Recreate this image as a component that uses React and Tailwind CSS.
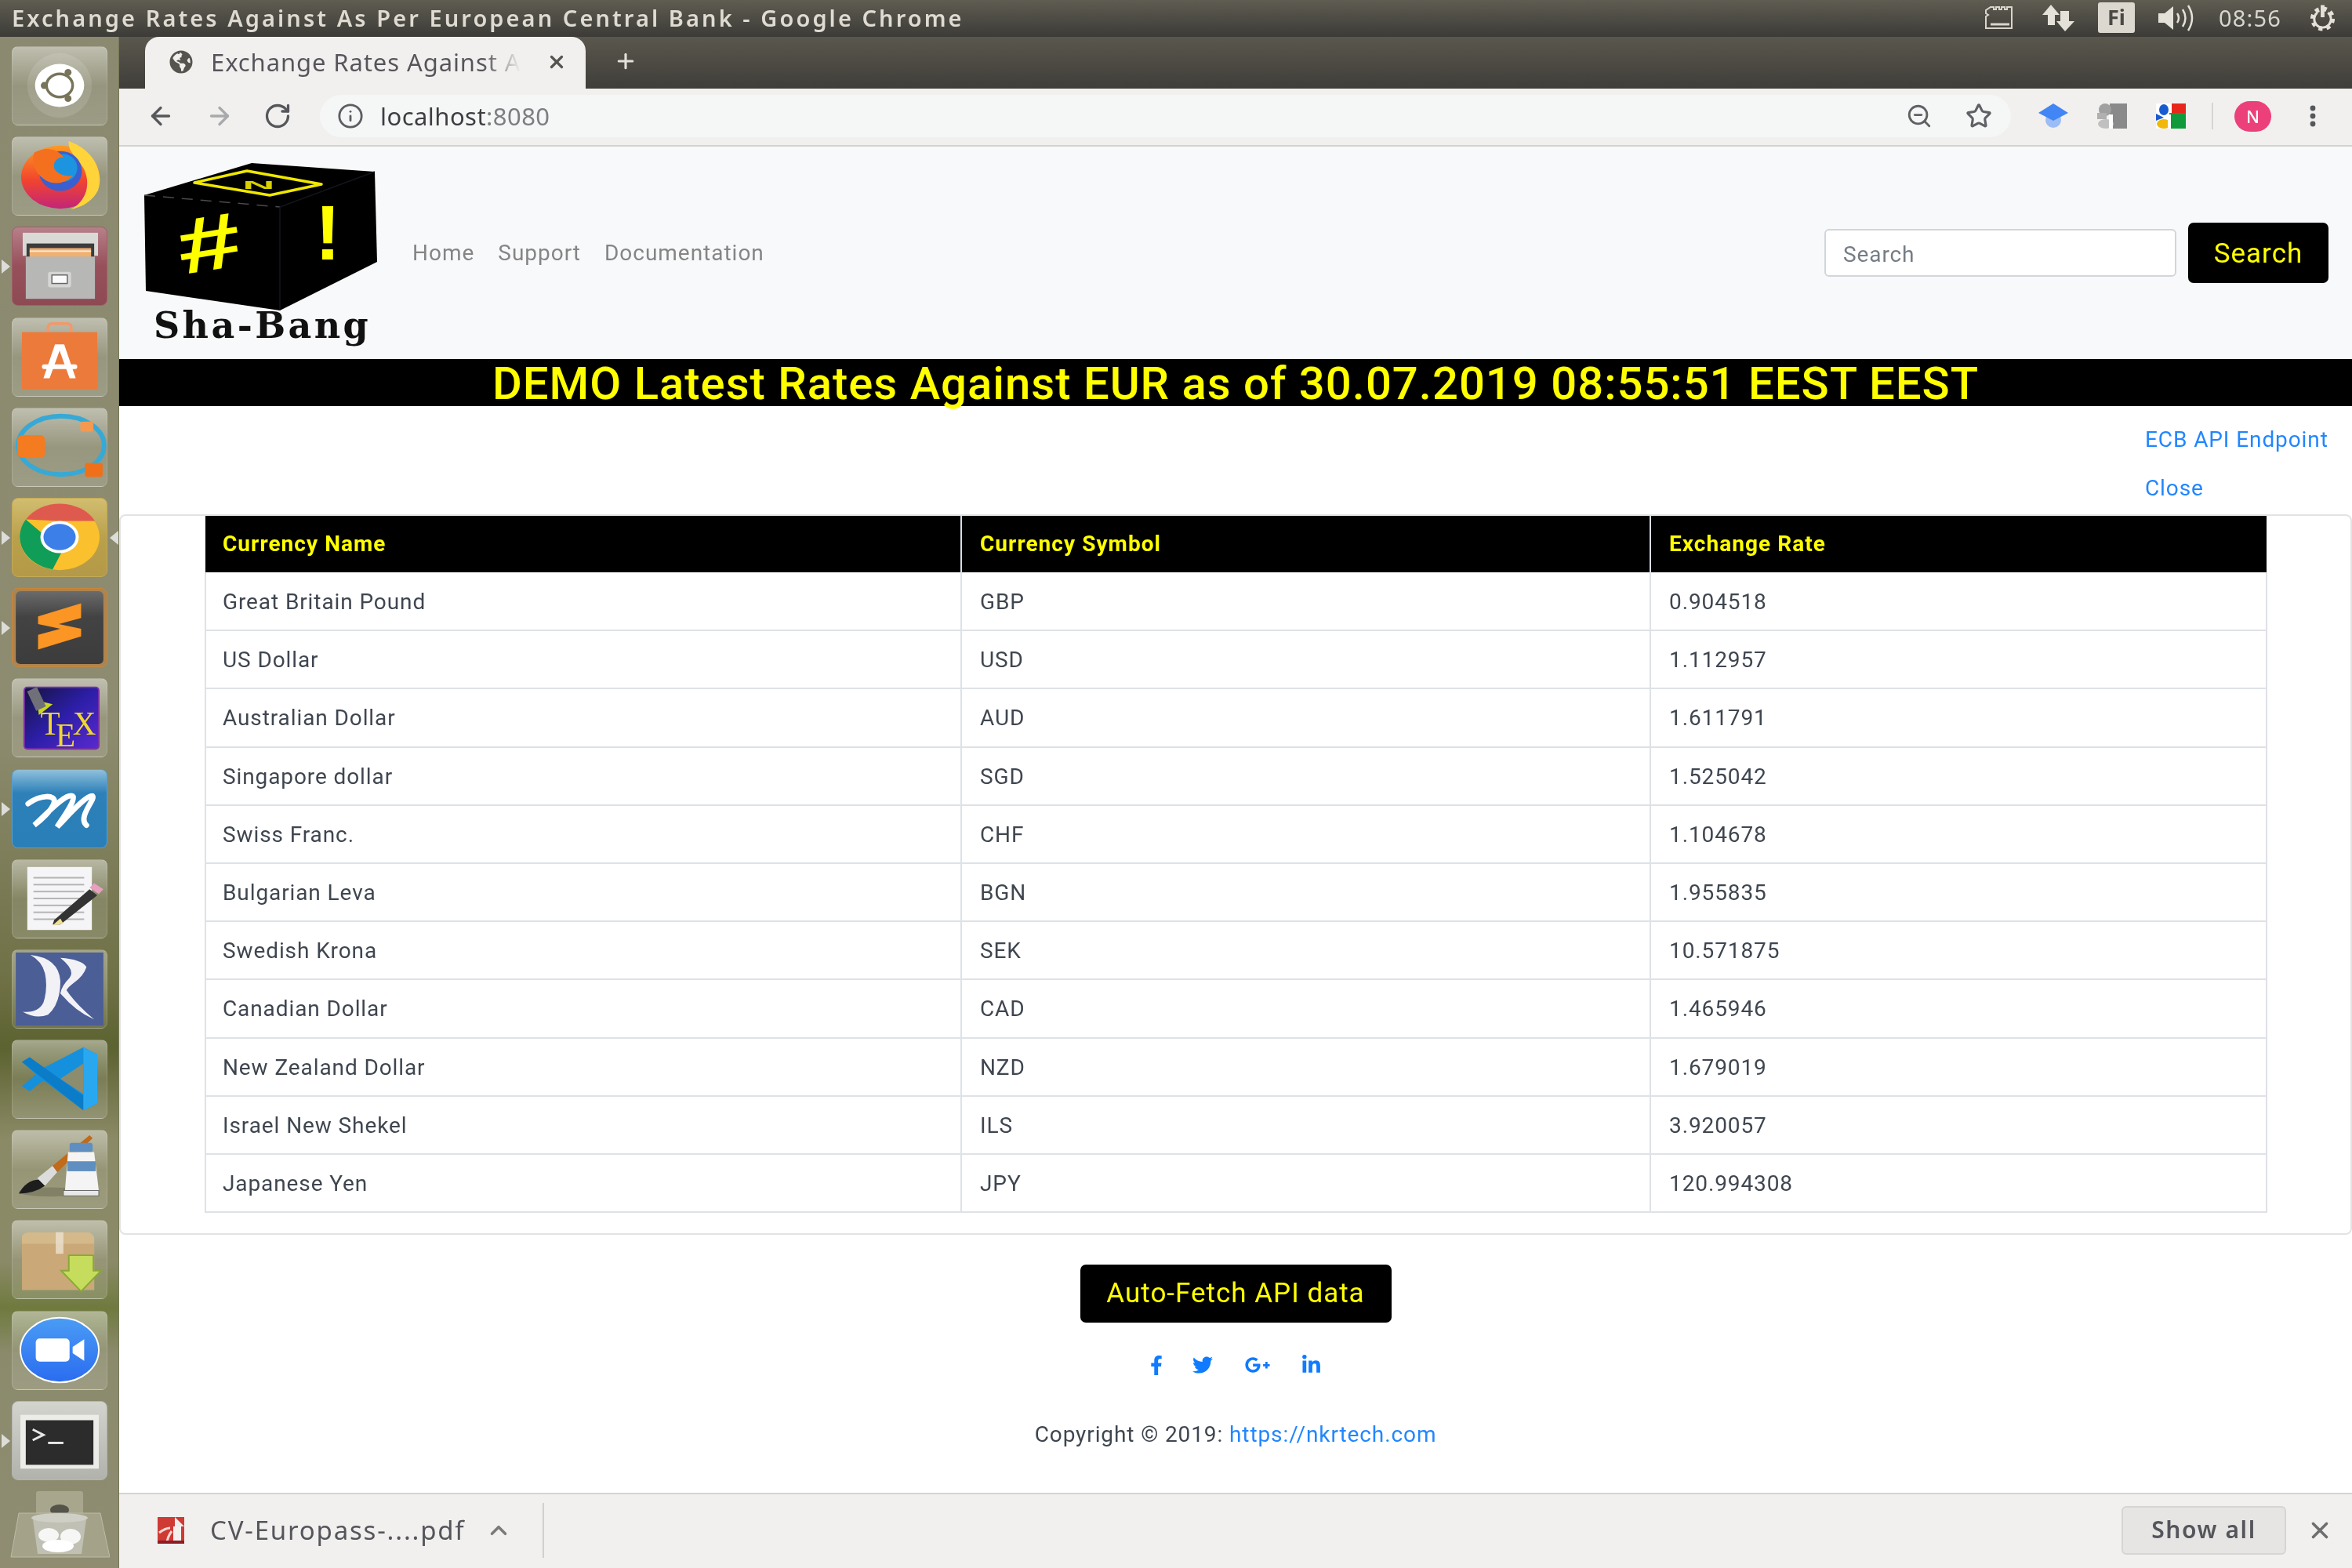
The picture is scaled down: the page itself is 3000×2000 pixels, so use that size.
import React from "react";
import { ArrowLeft, ArrowRight, RotateCw, Info, ZoomOut, Star, X, Plus, ChevronUp } from "lucide-react";
import { FaFacebookF, FaTwitter, FaGooglePlusG, FaLinkedinIn, FaGlobeAmericas } from "react-icons/fa";

const rates = [
  ["Great Britain Pound", "GBP", "0.904518"],
  ["US Dollar", "USD", "1.112957"],
  ["Australian Dollar", "AUD", "1.611791"],
  ["Singapore dollar", "SGD", "1.525042"],
  ["Swiss Franc.", "CHF", "1.104678"],
  ["Bulgarian Leva", "BGN", "1.955835"],
  ["Swedish Krona", "SEK", "10.571875"],
  ["Canadian Dollar", "CAD", "1.465946"],
  ["New Zealand Dollar", "NZD", "1.679019"],
  ["Israel New Shekel", "ILS", "3.920057"],
  ["Japanese Yen", "JPY", "120.994308"],
];

const tileBase = "relative h-[101px] w-[122px] rounded-[8px] border";
const tileDefault = "border-white/15 bg-gradient-to-b from-white/45 via-white/10 to-white/15";

function Tile({ cls = tileDefault, left, right, children }) {
  return (
    <div className={`${tileBase} ${cls} shrink-0`}>
      {left && <span className="absolute left-[-14px] top-[41px] h-0 w-0 border-y-[9px] border-l-[11px] border-y-transparent border-l-[#dcdcd8]" />}
      {right && <span className="absolute right-[-15px] top-[41px] h-0 w-0 border-y-[9px] border-r-[11px] border-y-transparent border-r-[#dcdcd8]" />}
      <svg viewBox="0 0 122 101" className="absolute inset-0 h-full w-full">{children}</svg>
    </div>
  );
}

function Dock() {
  return (
    <aside className="flex h-[1953px] w-[152px] shrink-0 flex-col items-center gap-[14.2px] border-r border-[#77785a] bg-[linear-gradient(180deg,#8b8a70_0%,#8d8c70_45%,#6e7044_62%,#5c6230_66%,#8b8a66_72%,#8b8a68_80%,#6f7a3e_83%,#8b8b6c_86%,#8f8c72_100%)] pt-[12px]">
      {/* Ubuntu */}
      <Tile>
        <ellipse cx="61" cy="50" rx="42" ry="42" fill="#ffffff" opacity=".12" />
        <ellipse cx="61" cy="50" rx="32" ry="28" fill="#fff" />
        <ellipse cx="61" cy="50" rx="17" ry="15" fill="none" stroke="#77745a" strokeWidth="3.5" />
        <circle cx="41" cy="50" r="4.5" fill="#77745a" />
        <circle cx="72" cy="33" r="4.5" fill="#77745a" />
        <circle cx="72" cy="67" r="4.5" fill="#77745a" />
      </Tile>
      {/* Firefox */}
      <Tile>
        <defs>
          <linearGradient id="ff" x1="0" y1="0" x2="0" y2="1">
            <stop offset="0" stopColor="#ff9a1f" />
            <stop offset=".55" stopColor="#f1442e" />
            <stop offset="1" stopColor="#c2257a" />
          </linearGradient>
        </defs>
        <ellipse cx="62" cy="52" rx="51" ry="41" fill="url(#ff)" />
        <path d="M73 5c34 12 46 42 38 64-7 14-20 22-36 25 18-8 28-30 18-52-6-13-22-22-20-37z" fill="#ffd43a" />
        <ellipse cx="62" cy="44" rx="28" ry="26" fill="#3a5fd0" />
        <ellipse cx="66" cy="40" rx="18" ry="18" fill="#1d94e0" />
        <path d="M28 20c14-8 30-6 38 6-8 0-14 6-12 14 2 6 12 12 24 10-8 10-26 14-38 4-12-8-16-24-12-34z" fill="#f4701f" />
      </Tile>
      {/* Files */}
      <Tile left cls="border-[#9d5f68] bg-gradient-to-b from-[#b7808a] via-[#96505a] to-[#8e4a52]">
        <rect x="13" y="7" width="98" height="30" fill="#d9d9d6" />
        <rect x="18" y="21" width="88" height="30" fill="#3c3c3c" />
        <rect x="22" y="27" width="80" height="14" fill="#f0b070" />
        <rect x="22" y="30" width="80" height="2" fill="#fff" opacity=".7" />
        <rect x="17" y="38" width="90" height="55" fill="#b7b7b5" />
        <rect x="46" y="58" width="30" height="20" rx="3" fill="#d6d6d4" />
        <rect x="51" y="62" width="20" height="11" fill="#fafafa" stroke="#666" strokeWidth="1.5" />
      </Tile>
      {/* Software */}
      <Tile>
        <path d="M46 20v-8q0-5 5-5h20q5 0 5 5v8" fill="none" stroke="#ee9a6e" strokeWidth="4" />
        <rect x="12" y="18" width="98" height="74" fill="#ec7a3b" />
        <path d="M40 78l15-44h12l15 44h-8l-13-36-13 36z" fill="#fff" />
        <rect x="38" y="60" width="46" height="6" rx="3" fill="#fff" />
      </Tile>
      {/* Arc diagram */}
      <Tile>
        <ellipse cx="63" cy="48" rx="56" ry="38" fill="none" stroke="#36a9d6" strokeWidth="6" />
        <rect x="6" y="35" width="36" height="29" rx="6" fill="#f47b20" />
        <rect x="88" y="17" width="17" height="13" rx="3" fill="#f49a50" />
        <rect x="94" y="71" width="23" height="18" rx="3" fill="#f0701a" />
      </Tile>
      {/* Chrome */}
      <Tile left right cls="border-[#c4aa55] bg-gradient-to-b from-[#d2bd70] via-[#b9a04b] to-[#b49a48]">
        <ellipse cx="61" cy="50" rx="52" ry="43" fill="#fbc02d" />
        <path d="M17 27A52 43 0 0 1 107 29L61 29z" fill="#df5a4e" />
        <path d="M17 27A52 43 0 0 0 52 92L74 50 44 50z" fill="#109d58" />
        <ellipse cx="61" cy="50" rx="25" ry="21" fill="#fff" />
        <ellipse cx="61" cy="50" rx="21" ry="17" fill="#3d7fe8" />
      </Tile>
      {/* Sublime */}
      <Tile left cls="border-[#c8873a] bg-[#ad8450]">
        <defs>
          <linearGradient id="sb" x1="0" y1="0" x2="0" y2="1">
            <stop offset="0" stopColor="#6b6b6b" />
            <stop offset=".35" stopColor="#434343" />
            <stop offset="1" stopColor="#3c3c3c" />
          </linearGradient>
        </defs>
        <rect x="4" y="3" width="114" height="95" rx="6" fill="url(#sb)" />
        <polygon points="33,36 89,19 89,38 60,46 89,52 89,62 33,79 33,60 62,52 33,46" fill="#fb9524" />
      </Tile>
      {/* TeX */}
      <Tile>
        <defs>
          <linearGradient id="tx" x1="0" y1="0" x2="1" y2="1">
            <stop offset="0" stopColor="#14143e" />
            <stop offset=".5" stopColor="#2d1ea8" />
            <stop offset="1" stopColor="#5a2ad0" />
          </linearGradient>
        </defs>
        <rect x="15" y="11" width="97" height="80" rx="4" fill="url(#tx)" stroke="#7a2fa8" strokeWidth="2" />
        <path d="M32 28l20 5-18 14z" fill="#c8d820" />
        <rect x="24" y="12" width="14" height="28" fill="#707078" transform="rotate(-25 31 26)" />
        <text x="36" y="72" fontFamily="'Liberation Serif', serif" fontSize="42" fill="#f0d830">T</text>
        <text x="56" y="88" fontFamily="'Liberation Serif', serif" fontSize="42" fill="#f0d830">E</text>
        <text x="78" y="72" fontFamily="'Liberation Serif', serif" fontSize="42" fill="#f0d830">X</text>
      </Tile>
      {/* Script M */}
      <Tile left cls="border-[#5c9dc9] bg-[linear-gradient(180deg,#8fc0dc_0%,#2d80b8_30%,#2a7fb8_100%)]">
        <path d="M20 44C36 32 56 32 54 42 52 52 36 66 28 72 44 58 68 30 78 34 84 38 60 70 58 74 70 62 96 32 104 34 108 38 84 62 96 72" fill="none" stroke="#fff" strokeWidth="7" strokeLinecap="round" />
      </Tile>
      {/* Notepad */}
      <Tile>
        <rect x="19" y="9" width="84" height="82" fill="#f5f5f7" />
        {[22, 31, 40, 49, 58, 67, 76].map((y) => (
          <rect key={y} x="27" y={y} width="66" height="2" fill="#b4b4b4" />
        ))}
        <polygon points="54,78 100,38 110,46 62,84 52,84" fill="#333" />
        <polygon points="100,36 112,44 118,38 106,30" fill="#e8a0c0" />
        <polygon points="62,76 52,85 66,83" fill="#f0e090" />
      </Tile>
      {/* JR */}
      <Tile cls="border-white/15 bg-gradient-to-b from-white/35 to-white/10">
        <rect x="4" y="3" width="114" height="95" fill="#4b5e96" />
        <path d="M23 6Q60 10 62 40 62 70 46 84 30 90 13 80 33 82 40 68 46 50 42 30 38 14 23 6z" fill="#f2f2f6" />
        <path d="M62 10Q90 12 96 22 92 34 80 42 72 48 70 52 82 70 106 90 82 80 62 56 64 46 74 36 82 26 62 10z" fill="#f2f2f6" />
      </Tile>
      {/* VS Code */}
      <Tile>
        <polygon points="92,9 110,18 110,82 92,91 40,52 22,66 12,60 30,44 12,28 22,22 40,36" fill="#1590dc" />
        <polygon points="12,28 22,22 92,72 92,91" fill="#0a7cc8" />
        <polygon points="92,9 110,18 110,82 92,91" fill="#29a8f0" />
        <polygon points="92,30 92,70 62,50" fill="#8c8c6f" />
      </Tile>
      {/* Paint */}
      <Tile>
        <ellipse cx="50" cy="80" rx="42" ry="6" fill="#3a3a2c" opacity=".25" />
        <path d="M8 82q10-18 26-18l8 8q-14 10-34 10z" fill="#1d1d1d" />
        <polygon points="32,62 52,46 58,54 42,72" fill="#dcdcdc" />
        <polygon points="52,46 100,6 104,10 58,54" fill="#c06a1a" />
        <rect x="74" y="16" width="30" height="12" rx="3" fill="#5f8fc0" />
        <path d="M72 28h34l6 50H68z" fill="#f4f4f4" />
        <rect x="71" y="40" width="37" height="13" fill="#5f8fc0" />
        <rect x="66" y="78" width="46" height="7" fill="#e8e8e8" stroke="#666" />
      </Tile>
      {/* Package */}
      <Tile>
        <path d="M12 20q2-4 8-5h78q6 1 8 7v68H12z" fill="#d4b98a" />
        <rect x="12" y="30" width="94" height="60" fill="#caa877" />
        <rect x="56" y="15" width="10" height="28" fill="#efe6d4" opacity=".75" />
        <polygon points="73,45 105,45 105,65 115,65 89,92 63,65 73,65" fill="#c6dc5c" stroke="#8aa838" strokeWidth="2" />
      </Tile>
      {/* Zoom */}
      <Tile>
        <defs>
          <linearGradient id="zm" x1="0" y1="0" x2="0" y2="1">
            <stop offset="0" stopColor="#4a9cf5" />
            <stop offset="1" stopColor="#2a6cf0" />
          </linearGradient>
        </defs>
        <ellipse cx="61" cy="50" rx="51" ry="42" fill="url(#zm)" stroke="#fff" strokeWidth="2" />
        <rect x="30" y="35" width="44" height="30" rx="5" fill="#fff" />
        <polygon points="78,46 93,36 93,64 78,54" fill="#fff" />
      </Tile>
      {/* Terminal */}
      <Tile left cls="border-[#b5b5b0] bg-gradient-to-b from-[#d4d4ce] to-[#b2b2ac]">
        <rect x="10" y="17" width="102" height="70" fill="#ecece8" />
        <rect x="17" y="24" width="88" height="58" fill="#2c2c2c" />
        <path d="M26 36l14 7-14 7" fill="none" stroke="#e8e8e8" strokeWidth="3" />
        <rect x="46" y="52" width="20" height="3" fill="#e8e8e8" />
      </Tile>
      {/* Trash */}
      <div className="relative h-[90px] w-[128px] shrink-0">
        <svg viewBox="0 0 128 90" className="absolute inset-0 h-full w-full">
          <rect x="34" y="0" width="60" height="30" rx="3" fill="#a9a68e" />
          <ellipse cx="64" cy="24" rx="12" ry="7" fill="#55544a" />
          <polygon points="12,28 116,28 128,84 2,84" fill="#a4a288" stroke="#bdbca8" />
          <path d="M30 36h68l-6 44H36z" fill="#c0c0b4" />
          <ellipse cx="64" cy="34" rx="36" ry="6" fill="#cfcfc6" />
          <ellipse cx="50" cy="56" rx="13" ry="9" fill="#f6f6f4" />
          <ellipse cx="78" cy="58" rx="13" ry="10" fill="#f6f6f4" />
          <ellipse cx="62" cy="70" rx="20" ry="8" fill="#ffffff" />
        </svg>
      </div>
    </aside>
  );
}

function TitleBar() {
  return (
    <header className="flex h-[47px] shrink-0 items-center bg-gradient-to-b from-[#5f5d52] to-[#3c3b37] pb-[2px] pl-[15px] font-['Noto_Sans',sans-serif] text-[#dfdbd2]">
      <span className="text-[29px] font-semibold tracking-[3.07px] whitespace-nowrap">Exchange Rates Against As Per European Central Bank - Google Chrome</span>
      <div className="ml-auto flex items-center">
        <svg viewBox="0 0 38 31" className="h-[31px] w-[38px] text-[#d8d5cc]" fill="none" stroke="currentColor" strokeWidth="2">
          <path d="M8 2h4v3h3V2h4v3h3V2h4v3h3V2h6v27H2V14l3-2-3-2V6z" />
          <path d="M8 24h24" strokeWidth="3" />
        </svg>
        <svg viewBox="0 0 41 34" className="ml-[36px] h-[34px] w-[41px]" fill="#e4e1d9">
          <path d="M11 0l11 13h-6v13H7V13H0zM29 34L18 21h5V8h11v13h7z" />
        </svg>
        <div className="ml-[30px] flex h-[39px] w-[47px] items-center justify-center rounded-[3px] bg-[#dcd8d0] text-[27px] font-bold text-[#4a4943]">Fi</div>
        <svg viewBox="0 0 46 36" className="ml-[30px] h-[36px] w-[46px] text-[#e4e1d9]" fill="none" stroke="currentColor" strokeWidth="2.5">
          <polygon points="0,12 8,12 19,3 19,33 8,24 0,24" fill="currentColor" stroke="none" />
          <path d="M24 12q4 6 0 12M31 7q7 11 0 22M38 2q10 16 0 32" />
        </svg>
        <span className="ml-[31px] w-[84px] text-[29px] tracking-[1.2px] text-[#d8d6d0]">08:56</span>
        <svg viewBox="0 0 38 36" className="ml-[30px] mr-[19px] h-[36px] w-[37px] text-[#e4e1d9]" fill="none" stroke="currentColor">
          <circle cx="19" cy="19" r="13" strokeWidth="6" strokeDasharray="5 5.2" />
          <path d="M12 11a11 11 0 1 0 14 0" strokeWidth="3" />
          <path d="M19 1v16" strokeWidth="5" />
        </svg>
      </div>
    </header>
  );
}

function TabStrip() {
  return (
    <div className="flex h-[66px] shrink-0 items-end bg-gradient-to-b from-[#5a574d] to-[#3f3e39] pl-[33px] font-['Noto_Sans',sans-serif]">
      <div className="flex h-[66px] w-[562px] items-center rounded-t-[18px] bg-[#f1f0ee] pb-[2px] pl-[30px] pr-[24px]">
        <FaGlobeAmericas className="h-[30px] w-[32px] shrink-0 text-[#55544f]" />
        <span className="ml-[22px] whitespace-nowrap bg-gradient-to-r from-[#55545a] from-[88%] to-[#f1f0ee] bg-clip-text text-[31px] tracking-[0.9px] text-transparent">Exchange Rates Against A</span>
        <X className="ml-auto h-[26px] w-[26px] shrink-0 text-[#55544f]" strokeWidth={3} />
      </div>
      <Plus className="mb-[20px] ml-[36px] h-[30px] w-[30px] text-[#e2e0da]" strokeWidth={2.5} />
    </div>
  );
}

function Toolbar() {
  return (
    <div className="flex h-[74px] shrink-0 items-center border-b-2 border-[#d2d2d0] bg-[#f1f0ee] pb-[2px] pl-[35px] font-['Noto_Sans',sans-serif]">
      <ArrowLeft className="h-[40px] w-[36px] text-[#55575b]" strokeWidth={2.2} />
      <ArrowRight className="ml-[39px] h-[40px] w-[36px] text-[#a8a9ab]" strokeWidth={2.2} />
      <RotateCw className="ml-[38px] h-[38px] w-[36px] text-[#55575b]" strokeWidth={2.2} />
      <div className="ml-[36px] flex h-[54px] w-[2157px] items-center rounded-full bg-[#f5f6f6] pl-[22px] pr-[24px]">
        <Info className="h-[36px] w-[34px] text-[#5c5e62]" strokeWidth={2} />
        <span className="ml-[21px] text-[31px] tracking-[0.45px] text-[#3e3e42]">localhost<span className="text-[#7d7e82]">:8080</span></span>
        <ZoomOut className="ml-auto h-[34px] w-[34px] text-[#5f6165]" strokeWidth={2} />
        <Star className="ml-[42px] h-[34px] w-[34px] text-[#5f6165]" strokeWidth={2.2} />
      </div>
      <svg viewBox="0 0 38 32" className="ml-[35px] h-[32px] w-[38px]">
        <circle cx="19" cy="21" r="10" fill="#9cbcf6" />
        <polygon points="19,0 38,12 19,22 0,12" fill="#4285f4" />
      </svg>
      <svg viewBox="0 0 38 32" className="ml-[37px] h-[32px] w-[38px]">
        <rect x="16" y="0" width="22" height="32" fill="#8a8a8a" />
        <ellipse cx="10" cy="8" rx="8" ry="8" fill="#a0a0a0" />
        <rect x="0" y="12" width="12" height="8" fill="#b0b0b0" />
        <ellipse cx="11" cy="26" rx="10" ry="6" fill="#c0c0c0" />
        <rect x="15" y="14" width="5" height="18" fill="#fff" />
      </svg>
      <svg viewBox="0 0 38 32" className="ml-[37px] h-[32px] w-[38px]">
        <rect x="0" y="0" width="38" height="32" fill="#fff" />
        <rect x="20" y="0" width="18" height="13" fill="#e8261c" />
        <rect x="17" y="12" width="21" height="20" fill="#0f9b3c" />
        <ellipse cx="10" cy="8" rx="6" ry="7" fill="#1a5ad0" />
        <polygon points="0,13 10,18 0,22" fill="#1a5ad0" />
        <ellipse cx="10" cy="26" rx="9" ry="6" fill="#f2b70a" />
        <rect x="15" y="14" width="4" height="18" fill="#fff" />
      </svg>
      <div className="ml-[33px] h-[34px] w-[2px] bg-[#d5d5d2]" />
      <div className="ml-[27px] flex h-[39px] w-[47px] items-center justify-center rounded-full bg-[#ec407a] text-[22px] font-medium text-white">N</div>
      <svg viewBox="0 0 10 28" className="ml-[48px] h-[28px] w-[10px]" fill="#55575b">
        <circle cx="5" cy="4" r="3.4" /><circle cx="5" cy="14" r="3.4" /><circle cx="5" cy="24" r="3.4" />
      </svg>
    </div>
  );
}

function Navbar() {
  return (
    <nav className="flex h-[271px] shrink-0 items-center bg-[#f8f9fa] pl-[32px] pr-[30px]">
      <div className="flex w-[298px] shrink-0 flex-col">
        <svg viewBox="0 0 298 190" className="h-[190px] w-[298px]">
          <polygon points="137,0 294,11 297,126 173,188 2,163 0,41" fill="#000" />
          <path d="M0 41L173 56" stroke="#4a4a4a" strokeWidth="1.5" strokeDasharray="14 10" />
          <path d="M173 56V188M173 56L294 11" stroke="#14141c" strokeWidth="1.5" />
          <polygon points="64,25 131,10 226,27 160,41" fill="none" stroke="#f0e800" strokeWidth="3.5" strokeLinejoin="round" />
          <text x="0" y="0" textAnchor="middle" fontFamily="'Liberation Sans', sans-serif" fontWeight="700" fontSize="26" fill="#d8d000" transform="translate(146 33) scale(2.2 .55)">N</text>
          <text x="0" y="0" textAnchor="middle" fontFamily="'Liberation Mono', monospace" fontWeight="700" fontSize="132" fill="#ffff00" transform="translate(88 136) rotate(-9) scale(1.06 .78)">#</text>
          <text x="234" y="123" textAnchor="middle" fontFamily="'Liberation Sans', sans-serif" fontWeight="700" fontSize="98" fill="#ffff00">!</text>
        </svg>
        <span className="ml-[12px] mt-[-6px] font-['DejaVu_Serif',serif] text-[46px] leading-[46px] font-bold tracking-[3.4px] whitespace-nowrap text-[#111]">Sha-Bang</span>
      </div>
      <ul className="ml-[44px] flex items-center gap-[30px] font-['Roboto',sans-serif] text-[28px] tracking-[0.98px] text-[#858585]">
        <li>Home</li>
        <li>Support</li>
        <li>Documentation</li>
      </ul>
      <div className="ml-auto flex items-center gap-[15px] font-['Roboto',sans-serif]">
        <input readOnly placeholder="Search" className="h-[61px] w-[449px] rounded-[6px] border-2 border-[#d2d6db] bg-white pl-[22px] pt-[3px] text-[28px] tracking-[0.9px] placeholder:text-[#757d85]" />
        <button className="h-[77px] w-[179px] rounded-[7px] bg-black pt-[3px] text-[35px] tracking-[1px] text-[#ffff00]">Search</button>
      </div>
    </nav>
  );
}

function RateTable() {
  return (
    <section className="rounded-[8px] border-2 border-[#e3e3e3] pb-[26px] font-['Roboto',sans-serif] text-[28px] tracking-[0.9px] text-[#3f4650]">
      <table className="ml-[107px] w-[2629px] table-fixed border-collapse">
        <colgroup>
          <col className="w-[964px]" />
          <col className="w-[879px]" />
          <col className="w-[786px]" />
        </colgroup>
        <thead>
          <tr className="h-[72px] bg-black text-left font-bold tracking-[1.05px] text-[#ffff00]">
            <th className="border-r-2 border-[#d8dde2] pl-[22px] font-bold">Currency Name</th>
            <th className="border-r-2 border-[#d8dde2] pl-[23px] font-bold">Currency Symbol</th>
            <th className="pl-[23px] font-bold">Exchange Rate</th>
          </tr>
        </thead>
        <tbody>
          {rates.map(([name, sym, rate]) => (
            <tr key={sym} className="h-[74.2px] border-b-2 border-[#dee2e6]">
              <td className="border-x-2 border-[#dee2e6] pl-[21px] pt-[2px]">{name}</td>
              <td className="border-r-2 border-[#dee2e6] pl-[23px] pt-[2px]">{sym}</td>
              <td className="border-r-2 border-[#dee2e6] pl-[23px] pt-[2px]">{rate}</td>
            </tr>
          ))}
        </tbody>
      </table>
    </section>
  );
}

function Page() {
  return (
    <main className="flex min-h-0 flex-1 flex-col bg-white font-['Roboto',sans-serif]">
      <Navbar />
      <div className="flex h-[60px] shrink-0 items-center justify-center bg-black pt-[2px]">
        <h1 className="font-['Roboto',sans-serif] text-[58px] leading-none font-medium tracking-[1px] whitespace-nowrap text-[#ffff00]">DEMO Latest Rates Against EUR as of 30.07.2019 08:55:51 EEST EEST</h1>
      </div>
      <div className="ml-auto mr-[30px] flex h-[138px] w-[234px] shrink-0 flex-col gap-[29px] pt-[26px] text-[28px] leading-[33px] tracking-[0.9px] text-[#2286ff]">
        <a>ECB API Endpoint</a>
        <a>Close</a>
      </div>
      <RateTable />
      <div className="mt-[38px] flex flex-col items-center">
        <button className="h-[74px] w-[397px] rounded-[7px] bg-black text-[35px] tracking-[1px] text-[#ffff00]">Auto-Fetch API data</button>
        <div className="mt-[40px] flex h-[28px] items-center text-[#0f7bff]">
          <FaFacebookF className="h-[25px] w-[16px]" />
          <FaTwitter className="ml-[36px] h-[26px] w-[30px]" />
          <FaGooglePlusG className="ml-[36px] h-[26px] w-[38px]" />
          <FaLinkedinIn className="ml-[36px] h-[26px] w-[27px]" />
        </div>
        <p className="mt-[58px] text-[28px] leading-[34px] tracking-[0.9px] text-[#3f4650]">Copyright © 2019: <a className="text-[#2286ff]">https://nkrtech.com</a></p>
      </div>
    </main>
  );
}

function DownloadBar() {
  return (
    <footer className="flex h-[96px] shrink-0 items-center border-t-2 border-[#d4d4d2] bg-[#f1f0ee] pb-[2px] pl-[49px] font-['Noto_Sans',sans-serif]">
      <svg viewBox="0 0 34 34" className="h-[34px] w-[34px] shrink-0">
        <rect width="34" height="34" fill="#cf3a34" />
        <path d="M22 0l12 12H22z" fill="#eee" />
        <rect x="20" y="12" width="10" height="20" fill="#f4f0ee" />
        <path d="M2 20q8-6 14-6M12 34q0-8 6-16" stroke="#f7d8d4" strokeWidth="3" fill="none" />
        <rect y="30" width="34" height="4" fill="#8e1c22" />
      </svg>
      <span className="ml-[33px] w-[322px] text-[33px] tracking-[1.8px] whitespace-nowrap text-[#55555c]">CV-Europass-....pdf</span>
      <ChevronUp className="ml-[29px] h-[34px] w-[34px] text-[#7a7a7a]" strokeWidth={2.5} />
      <div className="ml-[39px] h-[70px] w-[2px] bg-[#d0d0ce]" />
      <button className="ml-auto h-[62px] w-[210px] rounded-[6px] border-2 border-[#d6d5d3] bg-[#e6e5e3] pb-[4px] text-[30px] font-semibold tracking-[1.6px] text-[#55555c]">Show all</button>
      <X className="ml-[26px] mr-[24px] h-[34px] w-[34px] text-[#6e6e6e]" strokeWidth={2.5} />
    </footer>
  );
}

export default function App() {
  return (
    <div className="flex h-[2000px] w-[3000px] flex-col overflow-hidden bg-white blur-[0.7px]">
      <TitleBar />
      <div className="flex min-h-0 flex-1">
        <Dock />
        <div className="flex min-w-0 flex-1 flex-col">
          <TabStrip />
          <Toolbar />
          <Page />
          <DownloadBar />
        </div>
      </div>
    </div>
  );
}
